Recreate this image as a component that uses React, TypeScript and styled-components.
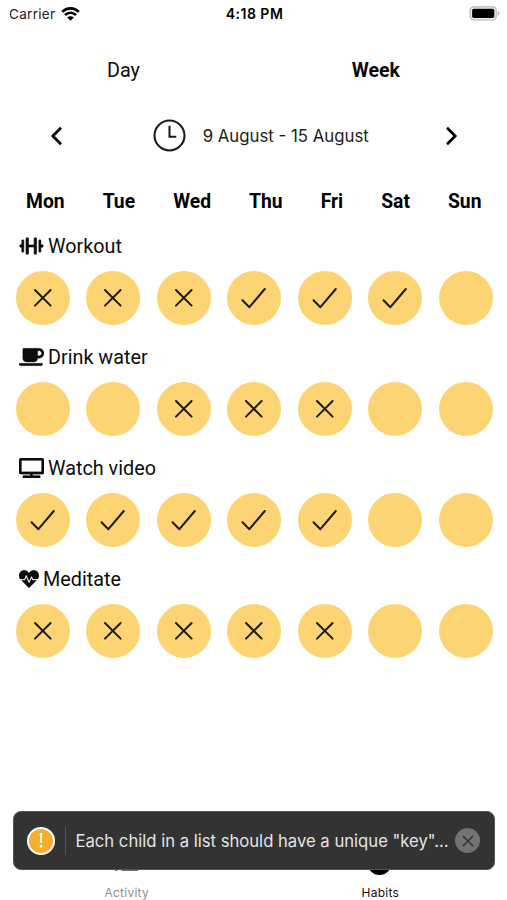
import React from "react";
import styled, { createGlobalStyle } from "styled-components";
import { FaCoffee, FaHeartbeat, FaTv } from "react-icons/fa";

const GlobalStyle = createGlobalStyle`
  * { box-sizing: border-box; }
  body { margin: 0; background: #fff; }
`;

const Screen = styled.div`
  position: relative;
  display: flex;
  flex-direction: column;
  width: 507px;
  height: 900px;
  overflow: hidden;
  background: #fff;
  color: #0c0c0c;
  font-family: Roboto, sans-serif;
`;

const StatusBar = styled.header`
  display: grid;
  grid-template-columns: 1fr auto 1fr;
  align-items: center;
  height: 28px;
  padding: 0 7px 1px 9px;
  font-family: Inter, sans-serif;
`;

const Carrier = styled.div`
  display: flex;
  align-items: center;
  gap: 6px;
  font-size: 13.5px;
  letter-spacing: 0.3px;
  color: #222;
`;

const Clock = styled.div`
  font-size: 14px;
  font-weight: 600;
  letter-spacing: 0.5px;
  color: #000;
`;

const BatterySlot = styled.div`
  display: flex;
  justify-content: flex-end;
`;

const Tabs = styled.nav`
  display: flex;
  justify-content: space-between;
  align-items: center;
  height: 86px;
  padding: 0 107px;
`;

const Tab = styled.span<{ $active?: boolean }>`
  font-size: ${(p) => (p.$active ? "19.5px" : "19.8px")};
  line-height: 24px;
  font-weight: ${(p) => (p.$active ? 700 : 400)};
`;

const DateBar = styled.div`
  display: flex;
  align-items: center;
  justify-content: space-between;
  height: 43px;
  padding: 0 49px 0 50px;
`;

const DateRange = styled.div`
  display: flex;
  align-items: center;
  gap: 16.5px;
  margin-left: 14px;
  font-family: Inter, sans-serif;
  font-size: 16.8px;
  color: #1c1c1c;
  white-space: nowrap;
`;

const DayNames = styled.div`
  display: flex;
  align-items: center;
  justify-content: space-between;
  height: 24px;
  margin-top: 32.5px;
  padding: 0 25.5px 0 26px;
  font-size: 19.3px;
  font-weight: 700;
  color: #000;
`;

const Habits = styled.main`
  display: flex;
  flex-direction: column;
  padding-top: 15.6px;
`;

const Habit = styled.section`
  height: 111.1px;
`;

const HabitTitle = styled.h2`
  display: flex;
  align-items: center;
  gap: 4px;
  height: 34px;
  margin: 0;
  padding-left: 19px;
  font-size: 19.8px;
  font-weight: 400;
`;

const HabitIcon = styled.span<{ $width: number }>`
  display: flex;
  svg {
    width: ${(p) => p.$width}px;
    height: 20px;
    stroke: currentColor;
    stroke-width: 6px;
  }
`;

const Marks = styled.div`
  display: flex;
  justify-content: space-between;
  padding: 8px 14.5px 0 15.5px;
`;

const Mark = styled.div`
  display: flex;
  align-items: center;
  justify-content: center;
  width: 54px;
  height: 54px;
  border-radius: 50%;
  background: #fdd473;
`;

const TabBar = styled.footer`
  display: grid;
  grid-template-columns: 1fr 1fr;
  height: 50px;
  margin-top: auto;
`;

const TabItem = styled.div<{ $active?: boolean }>`
  display: flex;
  flex-direction: column;
  align-items: center;
  gap: 10px;
  font-family: Inter, sans-serif;
  font-size: 12px;
  line-height: 14px;
  letter-spacing: 0.25px;
  color: ${(p) => (p.$active ? "#111" : "#8e8e8e")};
`;

const Toast = styled.div`
  position: absolute;
  left: 13px;
  top: 811px;
  width: 482px;
  height: 59px;
  display: flex;
  align-items: center;
  padding: 0 14px 0 13px;
  border: 1px solid #555;
  border-radius: 8px;
  background: #333;
`;

const WarningBadge = styled.div`
  display: flex;
  align-items: center;
  justify-content: center;
  width: 28px;
  height: 28px;
  border: 2.5px solid #fff;
  border-radius: 50%;
  background: #f3b02f;
`;

const ToastText = styled.div`
  display: flex;
  align-items: center;
  height: 28px;
  margin-left: 10px;
  padding-left: 9.5px;
  border-left: 1px solid #555;
  font-family: Inter, sans-serif;
  font-size: 16.65px;
  color: #e5e5e5;
  white-space: nowrap;
`;

const Dismiss = styled.div`
  display: flex;
  align-items: center;
  justify-content: center;
  width: 25px;
  height: 25px;
  margin-left: auto;
  border-radius: 50%;
  background: #737373;
`;

const Wifi = () => (
  <svg width="19" height="14" viewBox="0 0 19 14" fill="none" stroke="#000" strokeWidth="2.6">
    <path d="M1.2 4.8C5.8.2 13.2.2 17.8 4.8M4 8c3.1-3 7.9-3 11 0" />
    <path d="M9.5 13.7 6.2 10.4c1.9-1.7 4.7-1.7 6.6 0Z" fill="#000" stroke="none" />
  </svg>
);

const Battery = () => (
  <svg width="31" height="15" viewBox="0 0 31 15">
    <rect x="1.2" y=".8" width="26" height="13.2" rx="3.6" fill="#eee" stroke="#b5b5b5" strokeWidth="1.2" />
    <rect x="3.1" y="2.7" width="22.2" height="9.4" rx="1.8" fill="#000" />
    <path d="M28.8 5.1c2.2.8 2.2 3.8 0 4.6Z" fill="#aaa" />
  </svg>
);

const Chevron = ({ d }: { d: string }) => (
  <svg width="14" height="20" viewBox="0 0 14 20" fill="none" stroke="#000" strokeWidth="2.7">
    <path d={d} />
  </svg>
);

const ClockFace = () => (
  <svg width="33" height="33" viewBox="0 0 33 33" fill="none" stroke="#1c1c1c" strokeWidth="2.1">
    <circle cx="16.5" cy="16.5" r="15" />
    <path d="M16.5 6.8v11h6.8" />
  </svg>
);

const Dumbbell = () => (
  <svg viewBox="0 0 250 200" fill="currentColor">
    <rect x="8" y="88" width="26" height="24" rx="8" />
    <rect x="28" y="38" width="20" height="124" rx="8" />
    <rect x="70" y="17" width="25" height="166" rx="9" />
    <rect x="90" y="90" width="70" height="20" />
    <rect x="151" y="17" width="25" height="166" rx="9" />
    <rect x="199" y="38" width="20" height="124" rx="8" />
    <rect x="215" y="88" width="26" height="24" rx="8" />
  </svg>
);

const Cross = () => (
  <svg width="20" height="20" viewBox="0 0 20 20" fill="none" stroke="#1d1a10" strokeWidth="2" strokeLinecap="round">
    <path d="m2 2 15.6 15.6M17.6 2 2 17.6" />
  </svg>
);

const Check = () => (
  <svg width="28" height="24" viewBox="0 0 28 24" fill="none" stroke="#1d1a10" strokeWidth="2" strokeLinecap="round" strokeLinejoin="round">
    <path d="m2.5 14.3 6.9 6.9L24.8 3" />
  </svg>
);

const ListIcon = () => (
  <svg width="26" height="26" viewBox="0 0 26 26" stroke="#444" strokeWidth="2.5" strokeLinecap="round">
    <path d="M2.3 4h.1M2.3 12h.1M2.3 19.8h.1M8.3 4h15M8.3 12h15M8.3 19.4h15" />
  </svg>
);

const Dot = () => (
  <svg width="26" height="26" viewBox="0 0 26 26">
    <circle cx="12.5" cy="13" r="12" />
  </svg>
);

const habits = [
  { name: "Workout", Icon: Dumbbell, iconWidth: 25, marks: "xxxvvv-" },
  { name: "Drink water", Icon: FaCoffee, iconWidth: 25, marks: "--xxx--" },
  { name: "Watch video", Icon: FaTv, iconWidth: 25, marks: "vvvvv--" },
  { name: "Meditate", Icon: FaHeartbeat, iconWidth: 20, marks: "xxxxx--" },
];

const dayNames = ["Mon", "Tue", "Wed", "Thu", "Fri", "Sat", "Sun"];

export default function App() {
  return (
    <Screen>
      <GlobalStyle />
      <StatusBar>
        <Carrier>
          Carrier
          <Wifi />
        </Carrier>
        <Clock>4:18 PM</Clock>
        <BatterySlot>
          <Battery />
        </BatterySlot>
      </StatusBar>
      <Tabs>
        <Tab>Day</Tab>
        <Tab $active>Week</Tab>
      </Tabs>
      <DateBar>
        <Chevron d="M11 1.8 2.8 10l8.2 8.2" />
        <DateRange>
          <ClockFace />
          <span>9 August - 15 August</span>
        </DateRange>
        <Chevron d="m3 1.8 8.2 8.2L3 18.2" />
      </DateBar>
      <DayNames>
        {dayNames.map((day) => (
          <span key={day}>{day}</span>
        ))}
      </DayNames>
      <Habits>
        {habits.map(({ name, Icon, iconWidth, marks }) => (
          <Habit key={name}>
            <HabitTitle>
              <HabitIcon $width={iconWidth}>
                <Icon />
              </HabitIcon>
              {name}
            </HabitTitle>
            <Marks>
              {[...marks].map((mark, i) => (
                <Mark key={i}>
                  {mark === "x" && <Cross />}
                  {mark === "v" && <Check />}
                </Mark>
              ))}
            </Marks>
          </Habit>
        ))}
      </Habits>
      <TabBar>
        <TabItem>
          <ListIcon />
          Activity
        </TabItem>
        <TabItem $active>
          <Dot />
          Habits
        </TabItem>
      </TabBar>
      <Toast>
        <WarningBadge>
          <svg width="4" height="15" viewBox="0 0 4 15" fill="#fff">
            <path d="M.8 0h2.4l-.4 10H1.2ZM.8 12h2.4v2.4H.8Z" />
          </svg>
        </WarningBadge>
        <ToastText>Each child in a list should have a unique "key"...</ToastText>
        <Dismiss>
          <svg width="12" height="12" viewBox="0 0 12 12" stroke="#333" strokeWidth="1.6">
            <path d="m1 1 10 10M11 1 1 11" />
          </svg>
        </Dismiss>
      </Toast>
    </Screen>
  );
}
